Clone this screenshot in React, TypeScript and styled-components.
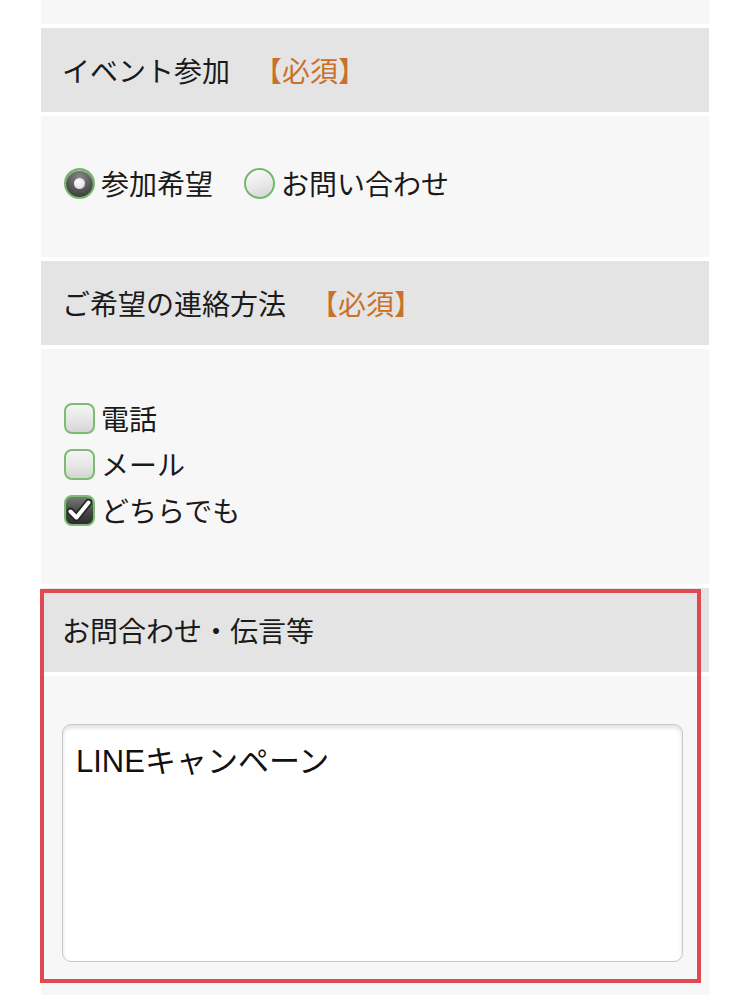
import React from 'react';
import styled, { createGlobalStyle } from 'styled-components';

const GlobalStyle = createGlobalStyle`
  html, body {
    margin: 0;
    padding: 0;
    background: #ffffff;
  }

  body {
    font-family: 'Noto Sans CJK JP', 'Noto Sans', sans-serif;
    color: #1a1a1a;
  }
`;

const Page = styled.div`
  height: 995px;
  overflow: hidden;
`;

const FormColumn = styled.form`
  display: flex;
  flex-direction: column;
  gap: 4px;
  width: 668px;
  margin-left: 41px;
`;

const Section = styled.section`
  position: relative;
  display: flex;
  flex-direction: column;
  gap: 4px;
`;

const Heading = styled.div`
  display: flex;
  align-items: center;
  height: 84px;
  padding-left: 21px;
  background: #e4e4e4;
  font-size: 28px;
  line-height: 1;
  color: #1a1a1a;
`;

const Required = styled.span`
  margin-left: 24px;
  color: #c9702a;
`;

const Panel = styled.div<{ $top?: number; $bottom?: number; $left?: number }>`
  display: flex;
  flex-direction: column;
  gap: 15px;
  padding: ${(p) => p.$top ?? 0}px 0 ${(p) => p.$bottom ?? 0}px ${(p) => p.$left ?? 23}px;
  background: #f7f7f7;
`;

const Stub = styled.div`
  height: 24px;
  background: #f7f7f7;
`;

const ChoiceRow = styled.div`
  display: flex;
  align-items: center;
`;

const Choice = styled.label`
  display: flex;
  align-items: center;
  gap: 6px;
  margin-right: 31px;
  font-size: 28px;
  line-height: 31px;
  cursor: pointer;
`;

const RadioMark = styled.span<{ $on?: boolean }>`
  position: relative;
  width: 31px;
  height: 31px;
  box-sizing: border-box;
  border-radius: 50%;
  border: 2px solid #74b96a;
  background: ${(p) =>
    p.$on
      ? 'radial-gradient(circle at 50% 30%, #8a8a8a 0%, #555 55%, #2e2e2e 100%)'
      : 'linear-gradient(160deg, #fbfbfb 0%, #e9e9e9 55%, #d2d2d2 100%)'};
  box-shadow: inset 0 1px 1px rgba(255, 255, 255, 0.6);
  flex-shrink: 0;

  &::after {
    content: '';
    display: ${(p) => (p.$on ? 'block' : 'none')};
    position: absolute;
    left: 50%;
    top: 50%;
    width: 11px;
    height: 11px;
    margin: -6px 0 0 -6px;
    border-radius: 50%;
    background: radial-gradient(circle at 40% 35%, #ffffff 0%, #e6e6e6 60%, #bdbdbd 100%);
  }
`;

const BoxMark = styled.span<{ $on?: boolean }>`
  display: flex;
  align-items: center;
  justify-content: center;
  width: 31px;
  height: 31px;
  box-sizing: border-box;
  border-radius: 8px;
  border: 2px solid #7bbd70;
  background: ${(p) =>
    p.$on
      ? 'linear-gradient(180deg, #7a7a7a 0%, #4a4a4a 50%, #2c2c2c 100%)'
      : 'linear-gradient(180deg, #f4f4f4 0%, #e6e6e6 55%, #d4d4d4 100%)'};
  flex-shrink: 0;
`;

const Message = styled.textarea`
  box-sizing: border-box;
  display: block;
  width: 621px;
  height: 238px;
  margin: 0;
  padding: 19px 13px;
  border: 1.5px solid #c8c8c8;
  border-radius: 9px;
  background: #ffffff;
  box-shadow: inset 0 3px 4px rgba(0, 0, 0, 0.12);
  font-family: 'Liberation Sans', 'Noto Sans CJK JP', sans-serif;
  font-size: 31px;
  line-height: 36px;
  color: #111;
  resize: none;
  outline: none;
`;

const Highlight = styled.div`
  position: absolute;
  top: 1px;
  left: -1px;
  width: 661px;
  height: 394px;
  box-sizing: border-box;
  border: 4px solid #de4a4f;
  pointer-events: none;
`;

const Check = () => (
  <svg width="25" height="23" viewBox="0 0 25 23">
    <path
      d="M3.5 12.5 L9.5 18.5 L21.5 3.5"
      fill="none"
      stroke="#262626"
      strokeWidth="7.5"
      strokeLinecap="round"
      strokeLinejoin="round"
    />
    <path
      d="M3.5 12.5 L9.5 18.5 L21.5 3.5"
      fill="none"
      stroke="#ffffff"
      strokeWidth="4"
      strokeLinecap="round"
      strokeLinejoin="round"
    />
  </svg>
);

const Radio: React.FC<{ on?: boolean; children: React.ReactNode }> = ({ on, children }) => (
  <Choice>
    <RadioMark $on={on} />
    {children}
  </Choice>
);

const CheckItem: React.FC<{ on?: boolean; children: React.ReactNode }> = ({ on, children }) => (
  <Choice>
    <BoxMark $on={on}>{on && <Check />}</BoxMark>
    {children}
  </Choice>
);

const App: React.FC = () => (
  <Page>
    <GlobalStyle />
    <FormColumn>
      <Stub />
      <Section>
        <Heading>
          イベント参加<Required>【必須】</Required>
        </Heading>
        <Panel $top={52} $bottom={58}>
          <ChoiceRow>
            <Radio on>参加希望</Radio>
            <Radio>お問い合わせ</Radio>
          </ChoiceRow>
        </Panel>
      </Section>
      <Section>
        <Heading>
          ご希望の連絡方法<Required>【必須】</Required>
        </Heading>
        <Panel $top={54} $bottom={58}>
          <CheckItem>電話</CheckItem>
          <CheckItem>メール</CheckItem>
          <CheckItem on>どちらでも</CheckItem>
        </Panel>
      </Section>
      <Section>
        <Heading>お問合わせ・伝言等</Heading>
        <Panel $top={48} $bottom={40} $left={21}>
          <Message defaultValue="LINEキャンペーン" />
        </Panel>
        <Highlight />
      </Section>
    </FormColumn>
  </Page>
);

export default App;
